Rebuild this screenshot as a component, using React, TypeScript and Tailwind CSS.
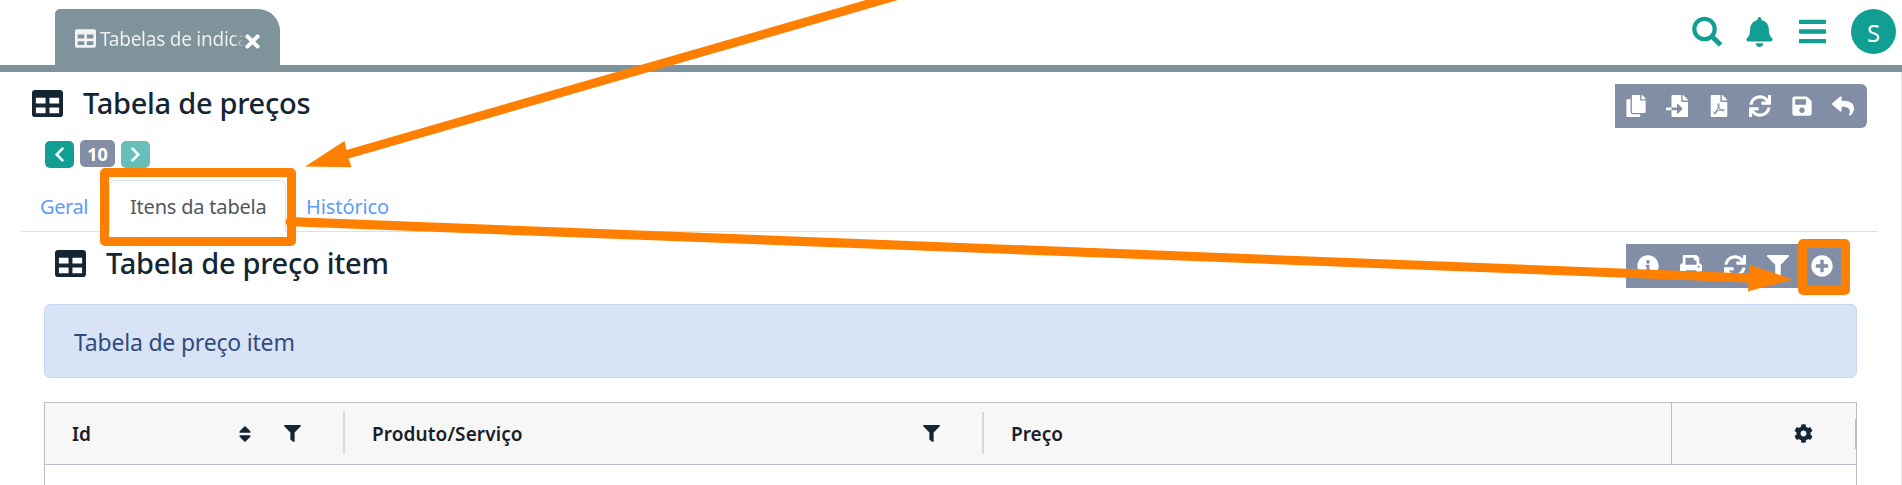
import type { ReactNode } from "react";
import {
  FaTable, FaTimes, FaBell, FaBars, FaCopy, FaFileImport, FaFilePdf, FaSync, FaSave, FaReply,
  FaInfoCircle, FaPrint, FaFilter, FaPlusCircle, FaCog, FaSort, FaChevronLeft, FaChevronRight,
} from "react-icons/fa";

function SearchIcon() {
  return (
    <svg width="31" height="31" viewBox="0 0 31 31" fill="none" stroke="currentColor">
      <circle cx="12.5" cy="13" r="10.2" strokeWidth="4.2" />
      <path d="M19.5 20 L28.6 29" strokeWidth="5" />
    </svg>
  );
}

function Tool({ children, w = "w-[41.5px]" }: { children: ReactNode; w?: string }) {
  return <button className={`${w} flex h-11 shrink-0 items-center justify-center text-white`}>{children}</button>;
}

function Header() {
  return (
    <header className="flex h-[72px] items-start justify-between border-b-[7px] border-[#7f939d]">
      <div className="mt-[9px] ml-[55px] flex h-14 w-[225px] items-center rounded-tl-[5px] rounded-tr-[22px] bg-[#7f939d] pl-5 text-[#f3f3f3]">
        <FaTable className="mt-[3px] h-[21px] w-[21px] shrink-0" />
        <span className="mt-[5px] -mr-[6px] ml-1 w-[151px] shrink-0 bg-linear-to-r from-[#f3f3f3] from-88% to-transparent to-96% bg-clip-text text-[19px] tracking-[-0.25px] whitespace-nowrap text-transparent">
          Tabelas de indica
        </span>
        <FaTimes className="mt-2 -ml-px h-[21px] w-[17px] shrink-0 text-white" />
      </div>
      <div className="flex text-[#119f93]">
        <div className="mt-4 w-[54px]"><SearchIcon /></div>
        <FaBell className="mt-[17px] h-[30px] w-[27px]" />
        <FaBars className="mt-4 ml-[25px] h-[31px] w-[29px]" />
        <div className="mt-[9px] mr-[6px] ml-[24px] flex h-[45px] w-[45px] items-center justify-center rounded-full bg-[#119f93] pt-0.5 text-[24px] text-white">
          S
        </div>
      </div>
    </header>
  );
}

function Title({ text }: { text: string }) {
  return (
    <h1 className="flex items-center text-[29px] leading-[44px] font-medium tracking-[-0.28px] whitespace-nowrap text-[#142633]">
      <FaTable className="mr-[20px] h-[31px] w-[31px]" />
      {text}
    </h1>
  );
}

function Main() {
  return (
    <main className="h-[413px] border-r border-[#e9e9ec] pl-[21px]">
      <div className="flex h-[56px] justify-between pt-[7px] pl-[11px]">
        <div className="mt-[2px] h-[44px]"><Title text="Tabela de preços" /></div>
        <div className="mt-[5px] mr-[34px] flex h-11 w-[252px] rounded-r-md bg-[#828ea5]">
          <Tool><FaCopy size={22} /></Tool>
          <Tool><FaFileImport size={22} /></Tool>
          <Tool><FaFilePdf size={22} /></Tool>
          <Tool><FaSync size={22} /></Tool>
          <Tool><FaSave size={22} /></Tool>
          <Tool><FaReply size={22} /></Tool>
        </div>
      </div>
      <div className="mt-3 flex h-7 gap-[6px] pl-6 text-white">
        <button className="mt-px flex h-[27px] w-[29px] items-center justify-center rounded-[5px] bg-[#119f93]"><FaChevronLeft size={17} /></button>
        <span className="flex h-[27px] w-[35px] items-center justify-center rounded-[5px] bg-[#828ea5] text-[18px] leading-none font-bold">10</span>
        <button className="mt-px flex h-[27px] w-[29px] items-center justify-center rounded-[5px] bg-[#66bfb8]"><FaChevronRight size={17} /></button>
      </div>
      <nav className="mt-3 mr-[23px] flex h-[52px] items-stretch border-b border-[#dee2e6] text-[20px] text-[#5f9aff]">
        <a className="w-[88px] pt-3 pl-[19px] leading-[30px] tracking-[-0.4px]">Geral</a>
        <a className="-mb-px w-[177px] rounded-t-[6px] border border-b-0 border-[#dee2e6] bg-white pt-[11px] pl-5 leading-[30px] tracking-[-0.2px] text-[#50575e]">Itens da tabela</a>
        <a className="pt-3 pl-5 leading-[30px] tracking-[-0.1px]">Histórico</a>
      </nav>
      <div className="mr-[44px] pl-[23px]">
        <div className="flex h-[72px] justify-between pl-[11px]">
          <div className="pt-[9px]"><Title text="Tabela de preço item" /></div>
          <div className="mt-3 mr-[13px] flex h-11 bg-[#828ea5]">
            <Tool w="w-[43px]"><FaInfoCircle size={22} /></Tool>
            <Tool w="w-[44px]"><FaPrint size={22} /></Tool>
            <Tool w="w-[43px]"><FaSync size={22} /></Tool>
            <Tool w="w-[44px]"><FaFilter size={22} /></Tool>
            <Tool w="w-[44px]"><FaPlusCircle size={22} /></Tool>
          </div>
        </div>
        <div className="flex h-[74px] items-center rounded-[6px] border border-[#c9d7f2] bg-[#d8e3f6] pt-[3px] pl-[29px] text-[23px] tracking-[-0.2px] text-[#304c80]">
          Tabela de preço item
        </div>
        <div className="mt-6 h-[83px] border border-b-0 border-[#b8bfca]">
          <div className="flex h-[62px] items-center border-b border-[#b8bfca] bg-[#f7f7f7] text-[19px] font-semibold text-[#172029]">
            <div className="flex w-[300px] items-center pl-[27px]">
              <span className="mt-0.5 w-[166px]">Id</span>
              <FaSort className="h-[20px] w-[14px] text-[#142633]" />
              <FaFilter className="ml-[32px] h-[17px] w-[17px] text-[#142633]" />
              <i className="-mt-px ml-auto h-[42px] w-[2px] bg-[#d5d9df]" />
            </div>
            <div className="flex w-[639px] items-center pl-[27px]">
              <span className="mt-0.5 tracking-[0.1px]">Produto/Serviço</span>
              <FaFilter className="ml-auto h-[17px] w-[17px] text-[#142633]" />
              <i className="-mt-px ml-[42px] h-[42px] w-[2px] bg-[#d5d9df]" />
            </div>
            <div className="mt-0.5 pl-[27px]">Preço</div>
            <div className="ml-auto flex h-full w-[185px] items-center border-l border-[#b8bfca] pl-[122px]">
              <FaCog className="-mt-px h-[19px] w-[19px] text-[#142633]" />
              <i className="ml-auto h-[30px] w-px bg-[#b8bfca]" />
            </div>
          </div>
        </div>
      </div>
    </main>
  );
}

function Highlights() {
  return (
    <>
      <div className="absolute top-[168px] left-[100px] h-[78px] w-[196px] rounded-[5px] border-[9px] border-[#ff8000]" />
      <div className="absolute top-[239px] left-[1798px] h-[56px] w-[52px] rounded-[5px] border-[9px] border-[#ff8000]" />
      <svg className="absolute inset-0" width="1902" height="485" fill="#ff8000">
        <path d="M305 166.5 L344.5 141 L346.5 150 L866 0 H898 L348.5 158.5 L351.5 167.3 Z" />
        <path d="M290 217 L1749 273.4 L1749.3 264.7 L1793 279.5 L1748 291.2 L1748.5 282.4 L290 226.3 Z" />
        <circle cx="290" cy="221.7" r="4.5" />
      </svg>
    </>
  );
}

export default function App() {
  return (
    <div className="relative h-[485px] w-[1902px] overflow-hidden bg-white font-['Noto_Sans',sans-serif]">
      <Header />
      <Main />
      <Highlights />
    </div>
  );
}
